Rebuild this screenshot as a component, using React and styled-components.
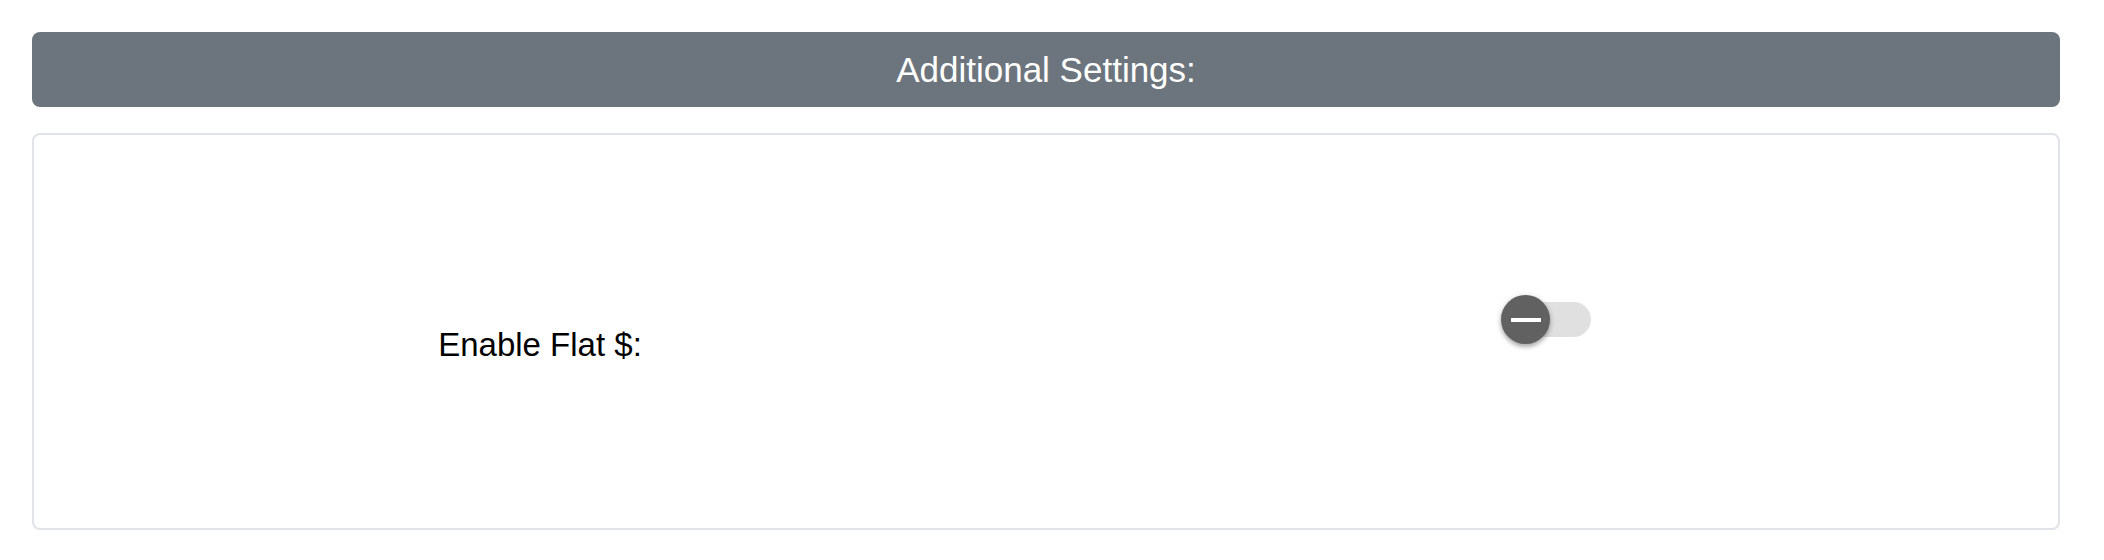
import styled, { createGlobalStyle } from "styled-components";

const GlobalStyle = createGlobalStyle`
  body {
    margin: 0;
    background: #ffffff;
    font-family: "Liberation Sans", Arial, sans-serif;
  }
`;

const Page = styled.div`
  width: 2028px;
  padding: 32px;
  display: flex;
  flex-direction: column;
  gap: 26px;
`;

const Header = styled.div`
  height: 75px;
  display: flex;
  align-items: center;
  justify-content: center;
  background-color: #6c757d;
  border-radius: 8px;
  color: #ffffff;
  font-size: 35px;
`;

const Card = styled.div`
  height: 397px;
  box-sizing: border-box;
  border: 2px solid #e0e3e7;
  border-radius: 8px;
  display: grid;
  grid-template-columns: 1fr 1fr;
  align-items: center;
`;

const Label = styled.div`
  justify-self: center;
  margin-top: 26px;
  font-size: 33px;
  color: #000000;
`;

const SwitchBox = styled.div`
  justify-self: center;
  margin-bottom: 24px;
  margin-right: 12px;
  position: relative;
  width: 90px;
  height: 49px;
  display: flex;
  align-items: center;
`;

const Track = styled.div`
  margin-left: 7px;
  width: 83px;
  height: 35px;
  border-radius: 18px;
  background-color: #e0e0e0;
`;

const Thumb = styled.div`
  position: absolute;
  left: 0;
  top: 0;
  width: 49px;
  height: 49px;
  border-radius: 50%;
  background-color: #616161;
  box-shadow: 0 3px 4px rgba(0, 0, 0, 0.25), 0 1px 6px rgba(0, 0, 0, 0.15);
  display: flex;
  align-items: center;
  justify-content: center;
`;

const Minus = styled.span`
  width: 30px;
  height: 4px;
  background-color: #ffffff;
`;

const Toggle = () => (
  <SwitchBox>
    <Track />
    <Thumb>
      <Minus />
    </Thumb>
  </SwitchBox>
);

export default function App() {
  return (
    <>
      <GlobalStyle />
      <Page>
        <Header>Additional Settings:</Header>
        <Card>
          <Label>Enable Flat $:</Label>
          <Toggle />
        </Card>
      </Page>
    </>
  );
}
